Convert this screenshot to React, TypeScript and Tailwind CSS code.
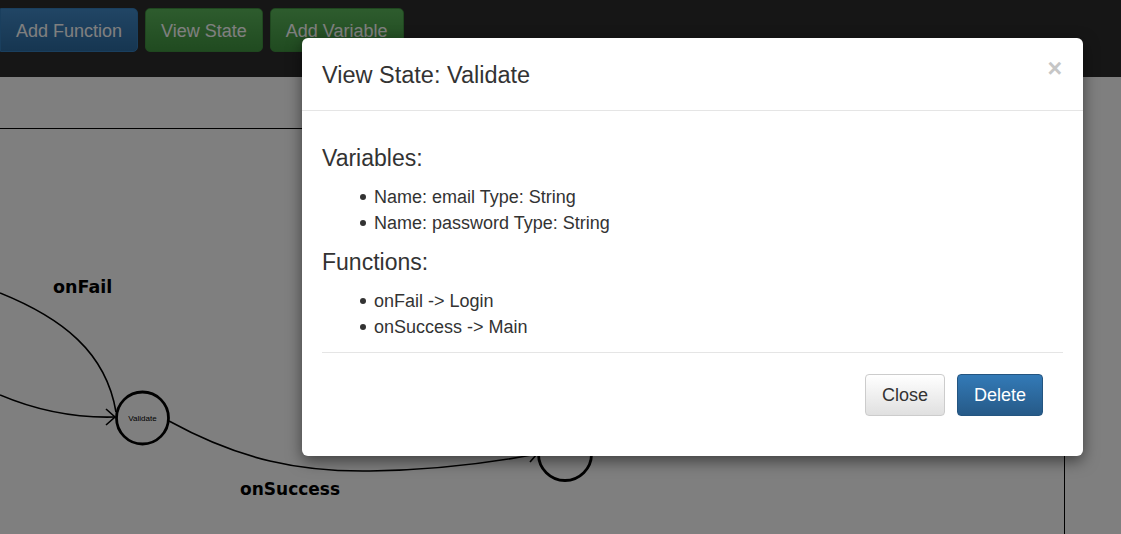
const variables = [
  { name: "email", type: "String" },
  { name: "password", type: "String" },
];

const functions = [
  { name: "onFail", target: "Login" },
  { name: "onSuccess", target: "Main" },
];

const Toolbar = () => (
  <div className="flex h-[77px] items-start gap-[7px] bg-[#2c2c2c] pt-2">
    <button className="h-[44px] rounded-r-[5px] border border-[#357ebd] bg-gradient-to-b from-[#428bca] to-[#2d6ca2] px-[15px] pt-[2px] text-[18px] text-white">
      Add Function
    </button>
    <button className="h-[44px] rounded-[5px] border border-[#3e8f3e] bg-gradient-to-b from-[#5cb85c] to-[#419641] px-[15px] pt-[2px] text-[18px] text-white">
      View State
    </button>
    <button className="h-[44px] rounded-[5px] border border-[#3e8f3e] bg-gradient-to-b from-[#5cb85c] to-[#419641] px-[15px] pt-[2px] text-[18px] text-white">
      Add Variable
    </button>
  </div>
);

const Graph = () => (
  <svg
    className="block h-[457px] w-[1121px]"
    viewBox="0 77 1121 457"
    fill="none"
    stroke="#000"
  >
    <path d="M0 128.5 H1064.5 V534" strokeWidth="1" />
    <path d="M0 293 C 62 318, 106 352, 116 412" strokeWidth="1.6" />
    <path d="M0 395 C 40 412, 80 418, 115 417" strokeWidth="1.6" />
    <path d="M106 409 L115 417 L106 425" strokeWidth="1.6" />
    <circle cx="142.5" cy="418" r="26" strokeWidth="2.8" />
    <text
      x="142.5"
      y="421"
      textAnchor="middle"
      fontSize="8"
      fill="#000"
      stroke="none"
      fontFamily="Liberation Sans, Arial, sans-serif"
    >
      Validate
    </text>
    <path d="M169 421 C 240 460, 300 472, 370 471 S 490 463, 537 454" strokeWidth="1.6" />
    <path d="M530 462 L537 454" strokeWidth="1.6" />
    <circle cx="565" cy="454" r="26.5" strokeWidth="2.8" />
    <text
      x="53"
      y="293"
      fontSize="17.5"
      fontWeight="bold"
      fill="#000"
      stroke="none"
      fontFamily="DejaVu Sans, Verdana, sans-serif"
    >
      onFail
    </text>
    <text
      x="240"
      y="495"
      fontSize="17"
      fontWeight="bold"
      fill="#000"
      stroke="none"
      fontFamily="DejaVu Sans, Verdana, sans-serif"
    >
      onSuccess
    </text>
  </svg>
);

const Bullet = ({ children }: { children: React.ReactNode }) => (
  <li className="flex h-[26px] items-center">
    <span className="mr-[8px] ml-[38px] h-[6px] w-[6px] rounded-full bg-[#333]" />
    {children}
  </li>
);

const Modal = () => (
  <div className="absolute top-[38px] left-[302px] w-[781px] rounded-[6px] bg-white text-[#333] shadow-[0_5px_15px_rgba(0,0,0,0.5)]">
    <div className="flex h-[73px] items-center justify-between border-b border-[#e5e5e5] px-5">
      <h3 className="mt-[2px] text-[23.5px] leading-[26px]">View State: Validate</h3>
      <button className="mt-[-12px] mr-[1px] text-[25px] leading-none font-bold text-[#c6c6c6]">
        ×
      </button>
    </div>
    <div className="px-5 pt-[34px] pb-10">
      <h3 className="text-[23px] leading-[26px]">Variables:</h3>
      <ul className="mt-[13px] text-[18px]">
        {variables.map((v) => (
          <Bullet key={v.name}>
            Name: {v.name} Type: {v.type}
          </Bullet>
        ))}
      </ul>
      <h3 className="mt-[13px] text-[23px] leading-[26px]">Functions:</h3>
      <ul className="mt-[13px] text-[18px]">
        {functions.map((f) => (
          <Bullet key={f.name}>
            {f.name} -&gt; {f.target}
          </Bullet>
        ))}
      </ul>
      <div className="mt-[12px] border-t border-[#e5e5e5]" />
      <div className="mt-[21px] flex justify-end gap-3 pr-5">
        <button className="h-[42px] rounded-[4px] border border-[#ccc] bg-gradient-to-b from-white to-[#e0e0e0] px-4 pt-[1px] text-[18px] text-[#333]">
          Close
        </button>
        <button className="h-[42px] rounded-[4px] border border-[#245580] bg-gradient-to-b from-[#337ab7] to-[#265a88] px-4 pt-[1px] text-[18px] text-white">
          Delete
        </button>
      </div>
    </div>
  </div>
);

export default function App() {
  return (
    <div className="relative h-[534px] w-[1121px] overflow-hidden bg-white font-['Liberation_Sans',Arial,sans-serif]">
      <Toolbar />
      <Graph />
      <div className="absolute inset-0 bg-black/50" />
      <Modal />
    </div>
  );
}
